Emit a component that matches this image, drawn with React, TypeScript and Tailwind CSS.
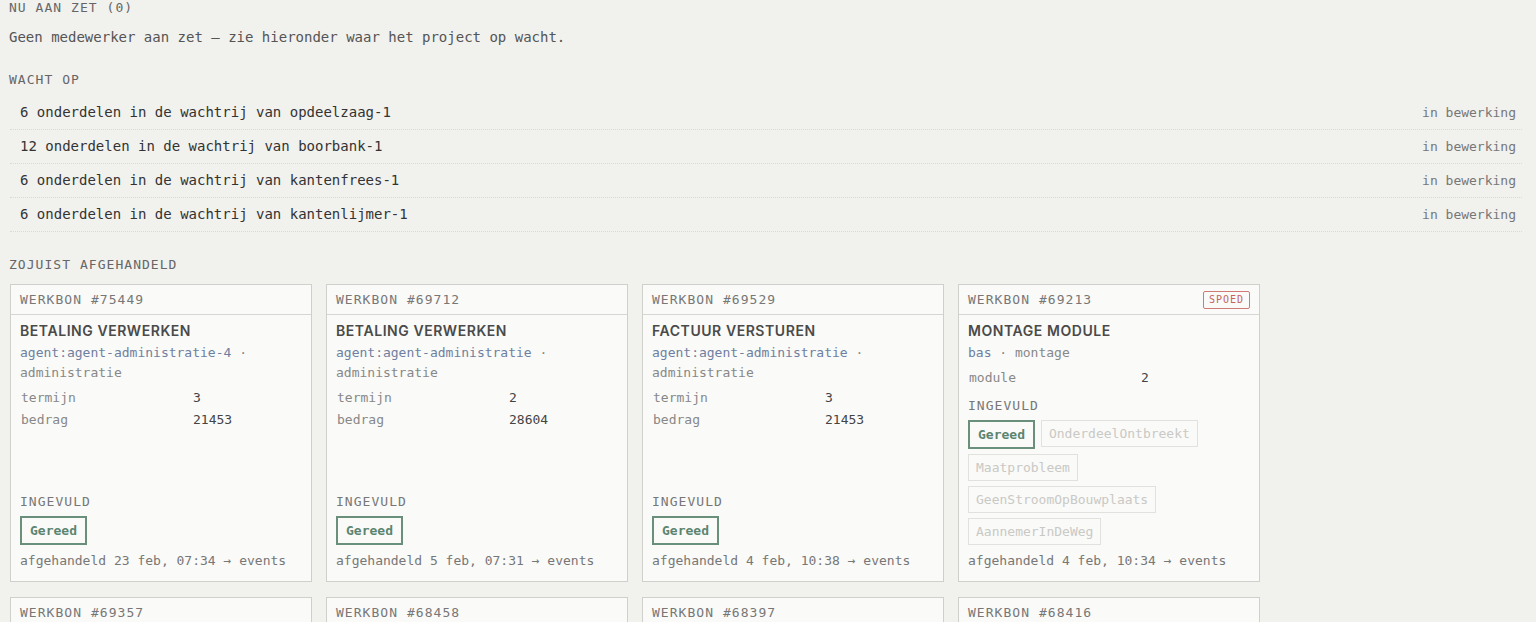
import React from 'react'

type Field = { k: string; v: string }
type Card = {
  id: string
  title: string
  who: string
  team: string
  wrap?: boolean
  fields: Field[]
  options: string[]
  done: string
  spoed?: boolean
}

const waits = [
  '6 onderdelen in de wachtrij van opdeelzaag-1',
  '12 onderdelen in de wachtrij van boorbank-1',
  '6 onderdelen in de wachtrij van kantenfrees-1',
  '6 onderdelen in de wachtrij van kantenlijmer-1',
]

const cards: Card[] = [
  {
    id: '75449',
    title: 'Betaling verwerken',
    who: 'agent:agent-administratie-4',
    team: 'administratie',
    wrap: true,
    fields: [
      { k: 'termijn', v: '3' },
      { k: 'bedrag', v: '21453' },
    ],
    options: ['Gereed'],
    done: '23 feb, 07:34',
  },
  {
    id: '69712',
    title: 'Betaling verwerken',
    who: 'agent:agent-administratie',
    team: 'administratie',
    wrap: true,
    fields: [
      { k: 'termijn', v: '2' },
      { k: 'bedrag', v: '28604' },
    ],
    options: ['Gereed'],
    done: '5 feb, 07:31',
  },
  {
    id: '69529',
    title: 'Factuur versturen',
    who: 'agent:agent-administratie',
    team: 'administratie',
    wrap: true,
    fields: [
      { k: 'termijn', v: '3' },
      { k: 'bedrag', v: '21453' },
    ],
    options: ['Gereed'],
    done: '4 feb, 10:38',
  },
  {
    id: '69213',
    title: 'Montage module',
    who: 'bas',
    team: 'montage',
    fields: [{ k: 'module', v: '2' }],
    options: ['Gereed', 'OnderdeelOntbreekt', 'Maatprobleem', 'GeenStroomOpBouwplaats', 'AannemerInDeWeg'],
    done: '4 feb, 10:34',
    spoed: true,
  },
  {
    id: '69357',
    title: 'Betaling verwerken',
    who: 'agent:agent-administratie',
    team: 'administratie',
    wrap: true,
    fields: [
      { k: 'termijn', v: '1' },
      { k: 'bedrag', v: '14302' },
    ],
    options: ['Gereed'],
    done: '3 feb, 16:12',
  },
  {
    id: '68458',
    title: 'Plaatsing keuken',
    who: 'bas',
    team: 'montage',
    fields: [{ k: 'module', v: '1' }],
    options: ['Gereed'],
    done: '2 feb, 14:05',
  },
  {
    id: '68397',
    title: 'Factuur versturen',
    who: 'agent:agent-administratie',
    team: 'administratie',
    wrap: true,
    fields: [
      { k: 'termijn', v: '2' },
      { k: 'bedrag', v: '28604' },
    ],
    options: ['Gereed'],
    done: '2 feb, 09:48',
  },
  {
    id: '68416',
    title: 'Montage module',
    who: 'bas',
    team: 'montage',
    fields: [{ k: 'module', v: '1' }],
    options: ['Gereed'],
    done: '1 feb, 11:20',
  },
]

const mono = "font-['DejaVu_Sans_Mono','Liberation_Mono',monospace]"

function Label({ children, className = '' }: { children: React.ReactNode; className?: string }) {
  return (
    <div className={`text-[13px] leading-[16px] tracking-[0.08em] uppercase text-[#666] ${className}`}>
      {children}
    </div>
  )
}

function WorkCard({ card }: { card: Card }) {
  return (
    <div className="flex flex-col bg-[#fafaf8] border border-[#cfcfcb]">
      <div className="h-[30px] flex items-center justify-between pl-[9px] pr-[9px] border-b border-[#d6d6d2]">
        <span className="text-[13px] tracking-[0.08em] text-[#777]">WERKBON #{card.id}</span>
        {card.spoed && (
          <span className="h-[18px] px-[5px] flex items-center border border-[#cf7a74] text-[#c4645e] text-[10px] tracking-[0.1em] rounded-[2px]">
            SPOED
          </span>
        )}
      </div>
      <div className="flex flex-col flex-1 px-[9px] pt-[7px] pb-[10px]">
        <div className="font-['Inter','Noto_Sans',sans-serif] font-semibold text-[14px] leading-[18px] tracking-[0.04em] uppercase text-[#4a4a4a]">
          {card.title}
        </div>
        <div className="mt-[3px] text-[13px] leading-[20px] text-[#888]">
          <span className="text-[#6f7fa1]">{card.who}</span>
          {' · '}
          {card.wrap && <br />}
          {card.team}
        </div>
        <div className="mt-[4px]">
          {card.fields.map((f) => (
            <div key={f.k} className="grid grid-cols-[172px_1fr] text-[13px] leading-[22px] pl-[1px]">
              <span className="text-[#888]">{f.k}</span>
              <span className="text-[#444]">{f.v}</span>
            </div>
          ))}
        </div>
        <div className="mt-auto pt-[9px]">
          <Label className="text-[#777]">Ingevuld</Label>
          <div className="mt-[6px] flex flex-wrap items-start gap-x-[6px] gap-y-[5px]">
            {card.options.map((o, i) =>
              i === 0 ? (
                <span
                  key={o}
                  className="h-[29px] px-[8px] flex items-center border-2 border-[#6a8f7b] text-[#5b8570] text-[13px] font-bold"
                >
                  {o}
                </span>
              ) : (
                <span
                  key={o}
                  className="h-[27px] px-[7px] flex items-center border border-[#e1e1dd] text-[#c9c9c5] text-[13px]"
                >
                  {o}
                </span>
              ),
            )}
          </div>
          <div className="mt-[6px] text-[13px] leading-[20px] text-[#777]">
            afgehandeld {card.done} → events
          </div>
        </div>
      </div>
    </div>
  )
}

export default function App() {
  return (
    <div className={`${mono} min-h-screen bg-[#f1f1ee] pl-[9px] pr-[14px] pb-8`}>
      <Label className="text-[#555]">Nu aan zet (0)</Label>
      <p className="mt-[12px] text-[14px] leading-[18px] text-[#555]">
        Geen medewerker aan zet — zie hieronder waar het project op wacht.
      </p>

      <Label className="mt-[26px]">Wacht op</Label>
      <div className="mt-[8px] ml-[1px]">
        {waits.map((w) => (
          <div
            key={w}
            className="h-[34px] flex items-center justify-between pl-[10px] pr-[6px] border-b border-dotted border-[#d9d9d5]"
          >
            <span className="text-[14px] text-[#333]">{w}</span>
            <span className="text-[13px] text-[#777]">in bewerking</span>
          </div>
        ))}
      </div>

      <Label className="mt-[25px]">Zojuist afgehandeld</Label>
      <div className="mt-[11px] ml-[1px] grid grid-cols-[repeat(4,302px)] gap-x-[14px] gap-y-[15px]">
        {cards.map((c) => (
          <WorkCard key={c.id} card={c} />
        ))}
      </div>
    </div>
  )
}
